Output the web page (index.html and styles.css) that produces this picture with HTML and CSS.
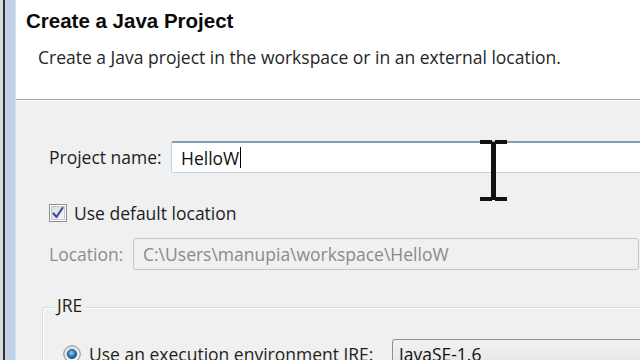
FILE: index.html
```html
<!DOCTYPE html>
<html>
<head>
<meta charset="utf-8">
<link rel="stylesheet" href="styles.css">
</head>
<body>
<div class="window">
  <div class="frame">
    <div class="f-light"></div>
    <div class="f-dark"></div>
    <div class="f-mid"></div>
    <div class="f-blue"></div>
    <div class="f-edge"></div>
  </div>
  <div class="dialog">
    <header class="banner">
      <h1 class="title">Create a Java Project</h1>
      <p class="subtitle">Create a Java project in the workspace or in an external location.</p>
    </header>
    <main class="content">
      <div class="row name-row">
        <span class="label">Project name:</span>
        <div class="input focused"><span class="value">HelloW</span><span class="caret"></span></div>
      </div>
      <div class="check-row">
        <svg class="checkbox" width="18" height="18" viewBox="0 0 18 18">
          <defs>
            <linearGradient id="cbg" x1="0" y1="0" x2="1" y2="1">
              <stop offset="0" stop-color="#d9dde3"/>
              <stop offset="1" stop-color="#f6f7f9"/>
            </linearGradient>
          </defs>
          <rect x="0.5" y="0.5" width="17" height="17" fill="#fff" stroke="#8e8f8f"/>
          <rect x="2.5" y="2.5" width="13" height="13" fill="url(#cbg)" stroke="#c2c6cc"/>
          <path d="M4.5 9.5 L7.5 13 L13.5 4" fill="none" stroke="#3d4f8c" stroke-width="2.2" stroke-linecap="round" stroke-linejoin="round"/>
        </svg>
        <span class="check-label">Use default location</span>
      </div>
      <div class="row loc-row">
        <span class="label disabled">Location:</span>
        <div class="input disabled-input"><span class="value">C:\Users\manupia\workspace\HelloW</span></div>
      </div>
      <div class="group">
        <div class="legend">JRE</div>
        <div class="radio-row">
          <svg class="radio" width="18" height="18" viewBox="0 0 18 18">
            <defs>
              <radialGradient id="rg" cx="0.45" cy="0.4" r="0.6">
                <stop offset="0" stop-color="#8fd3f7"/>
                <stop offset="0.55" stop-color="#2a8ac8"/>
                <stop offset="1" stop-color="#15467a"/>
              </radialGradient>
              <linearGradient id="rb" x1="0" y1="0" x2="1" y2="1">
                <stop offset="0" stop-color="#d5d8dc"/>
                <stop offset="1" stop-color="#fbfbfc"/>
              </linearGradient>
            </defs>
            <circle cx="9" cy="9" r="8.3" fill="url(#rb)" stroke="#8d8f91" stroke-width="1"/>
            <circle cx="9" cy="9" r="4.6" fill="url(#rg)" stroke="#1d4d7c" stroke-width="0.8"/>
          </svg>
          <span class="radio-label">Use an execution environment JRE:</span>
          <div class="combo"><span class="value">JavaSE-1.6</span></div>
        </div>
      </div>
    </main>
  </div>
  <svg class="ibeam" width="28" height="62" viewBox="0 0 28 62">
    <rect x="0" y="0" width="12" height="4" fill="#111"/>
    <rect x="15" y="0" width="12" height="4" fill="#111"/>
    <rect x="11" y="2" width="5" height="58" fill="#111"/>
    <rect x="0" y="57" width="12" height="4" fill="#111"/>
    <rect x="15" y="57" width="12" height="4" fill="#111"/>
  </svg>
</div>
</body>
</html>
```

FILE: styles.css
```css
html, body {
  margin: 0;
  padding: 0;
  width: 640px;
  height: 360px;
  overflow: hidden;
  background: #f0f0f0;
}

.window {
  position: relative;
  display: flex;
  width: 640px;
  height: 360px;
  overflow: hidden;
  font-family: "Open Sans", "Noto Sans", sans-serif;
  color: #1e1e1e;
}

.frame {
  display: flex;
  flex: 0 0 16px;
  height: 360px;
}
.f-light { width: 3px; background: #d9dcdf; }
.f-dark { width: 2px; background: #2c3330; }
.f-mid { width: 2px; background: #c9d3de; }
.f-blue { width: 8px; background: #bfd2ea; }
.f-edge { width: 1px; background: #d6e2f0; }

.dialog {
  flex: 1;
  display: flex;
  flex-direction: column;
  min-width: 0;
}

.banner {
  background: #ffffff;
  border-bottom: 1px solid #a5a5a5;
  box-sizing: border-box;
  padding-top: 7px;
  flex: 0 0 100px;
}

.title {
  margin: 0 0 0 10px;
  font-family: "Liberation Sans", Arial, sans-serif;
  font-weight: bold;
  font-size: 20.5px;
  line-height: 28px;
  color: #0a0a0a;
}

.subtitle {
  margin: 10px 0 0 22px;
  font-size: 17.5px;
  line-height: 24px;
  color: #262626;
}

.content {
  flex: 1;
  background: #f0f0f0;
  padding: 40px 0 0 33px;
  font-size: 17.5px;
  border-top: 1px solid #ffffff;
}

.row {
  display: flex;
  align-items: center;
}

.label {
  white-space: nowrap;
}
.disabled { color: #8d8d8d; }

.name-row .label { width: 122px; flex: 0 0 122px; }
.loc-row .label { width: 84px; flex: 0 0 84px; }

.input {
  box-sizing: border-box;
  height: 32px;
  display: flex;
  align-items: center;
  padding-left: 9px;
  border-radius: 2px;
  white-space: nowrap;
}

.focused {
  width: 520px;
  flex: 0 0 520px;
  background: #ffffff;
  border: 1px solid #bcd4ea;
  border-top: 2px solid #7fa0bb;
  color: #111;
}

.caret {
  display: inline-block;
  width: 1px;
  height: 21px;
  background: #000;
  margin-left: 1px;
}

.disabled-input {
  width: 506px;
  flex: 0 0 506px;
  background: #f0f0f0;
  border: 1px solid #c6c6c6;
  color: #8a8a8a;
  border-radius: 3px;
}

.check-row {
  display: flex;
  align-items: center;
  margin-top: 31px;
  height: 18px;
}
.checkbox { flex: 0 0 18px; margin-right: 7px; }

.loc-row { margin-top: 16px; }

.group {
  margin: 37px 0 0 -7px;
  border: 1px solid #d5dfe5;
  border-right: none;
  border-bottom: none;
  border-radius: 4px 0 0 0;
  height: 100px;
  box-shadow: inset 1px 1px 0 #ffffff;
  padding-left: 20px;
}

.legend {
  margin-top: -15px;
  margin-left: -8px;
  width: max-content;
  padding: 0 3px 0 2px;
  background: #f0f0f0;
  line-height: 24px;
}

.radio-row {
  display: flex;
  align-items: center;
  margin-top: 22px;
}
.radio { flex: 0 0 18px; margin-right: 8px; }
.radio-label { width: 303px; flex: 0 0 303px; white-space: nowrap; }

.combo {
  box-sizing: border-box;
  width: 300px;
  flex: 0 0 300px;
  height: 30px;
  border: 1px solid #8e8f8f;
  border-radius: 3px;
  background: linear-gradient(#f2f2f2, #e5e5e5);
  padding-left: 6px;
  display: flex;
  align-items: center;
  color: #111;
  white-space: nowrap;
}

.ibeam {
  position: absolute;
  left: 480px;
  top: 140px;
}
```
